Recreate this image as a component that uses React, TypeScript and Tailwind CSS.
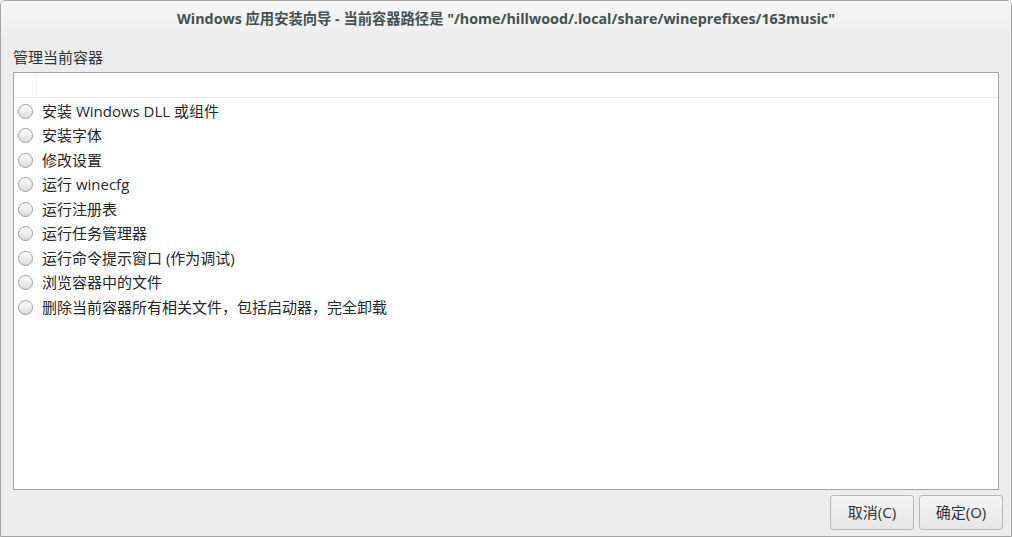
import React from "react";

const items = [
  "安装 Windows DLL 或组件",
  "安装字体",
  "修改设置",
  "运行 winecfg",
  "运行注册表",
  "运行任务管理器",
  "运行命令提示窗口 (作为调试)",
  "浏览容器中的文件",
  "删除当前容器所有相关文件，包括启动器，完全卸载",
];

const font = { fontFamily: '"Open Sans", "Noto Sans CJK SC", sans-serif' };

function Radio() {
  return (
    <span className="block w-[15px] h-[15px] rounded-full border border-[#9c9c9c] bg-gradient-to-b from-[#ffffff] to-[#dcdcdc] shadow-[inset_0_1px_0_#ffffff]" />
  );
}

export default function App() {
  return (
    <div
      className="w-[1012px] h-[537px] flex flex-col bg-[#ededed] border border-[#a4a4a4] rounded-t-[5px] overflow-hidden text-[#2e3436]"
      style={font}
    >
      <div className="h-[36px] shrink-0 flex items-center justify-center bg-gradient-to-b from-[#f7f7f7] to-[#ededed]">
        <span className="text-[14.3px] font-bold text-[#45504f] leading-none">
          Windows 应用安装向导 - 当前容器路径是 "/home/hillwood/.local/share/wineprefixes/163music"
        </span>
      </div>
      <div className="flex-1 flex flex-col px-[12px]">
        <div className="h-[20px] mt-[10px] mb-[5px] text-[15px] leading-[20px]">管理当前容器</div>
        <div className="h-[418px] border border-[#a4a4a4] bg-white flex flex-col">
          <div className="h-[25px] shrink-0 flex border-b border-[#ebebeb]">
            <div className="w-[23px] border-r border-[#f0f0f0]" />
            <div className="flex-1" />
          </div>
          <div className="flex flex-col pt-[1px]">
            {items.map((t) => (
              <div key={t} className="h-[24.5px] flex items-center pl-[4px] gap-[9px]">
                <Radio />
                <span className="text-[15px] leading-none text-[#222829]">{t}</span>
              </div>
            ))}
          </div>
        </div>
        <div className="flex justify-end gap-[5px] mt-[5px] -mr-[4px]">
          <button className="w-[84px] h-[35px] rounded-[3px] border border-[#b8b8b8] bg-gradient-to-b from-[#f4f4f4] to-[#e6e6e6] text-[15px] text-[#2e3436]">
            取消(C)
          </button>
          <button className="w-[84px] h-[35px] rounded-[3px] border border-[#b8b8b8] bg-gradient-to-b from-[#f4f4f4] to-[#e6e6e6] text-[15px] text-[#2e3436]">
            确定(O)
          </button>
        </div>
      </div>
    </div>
  );
}
